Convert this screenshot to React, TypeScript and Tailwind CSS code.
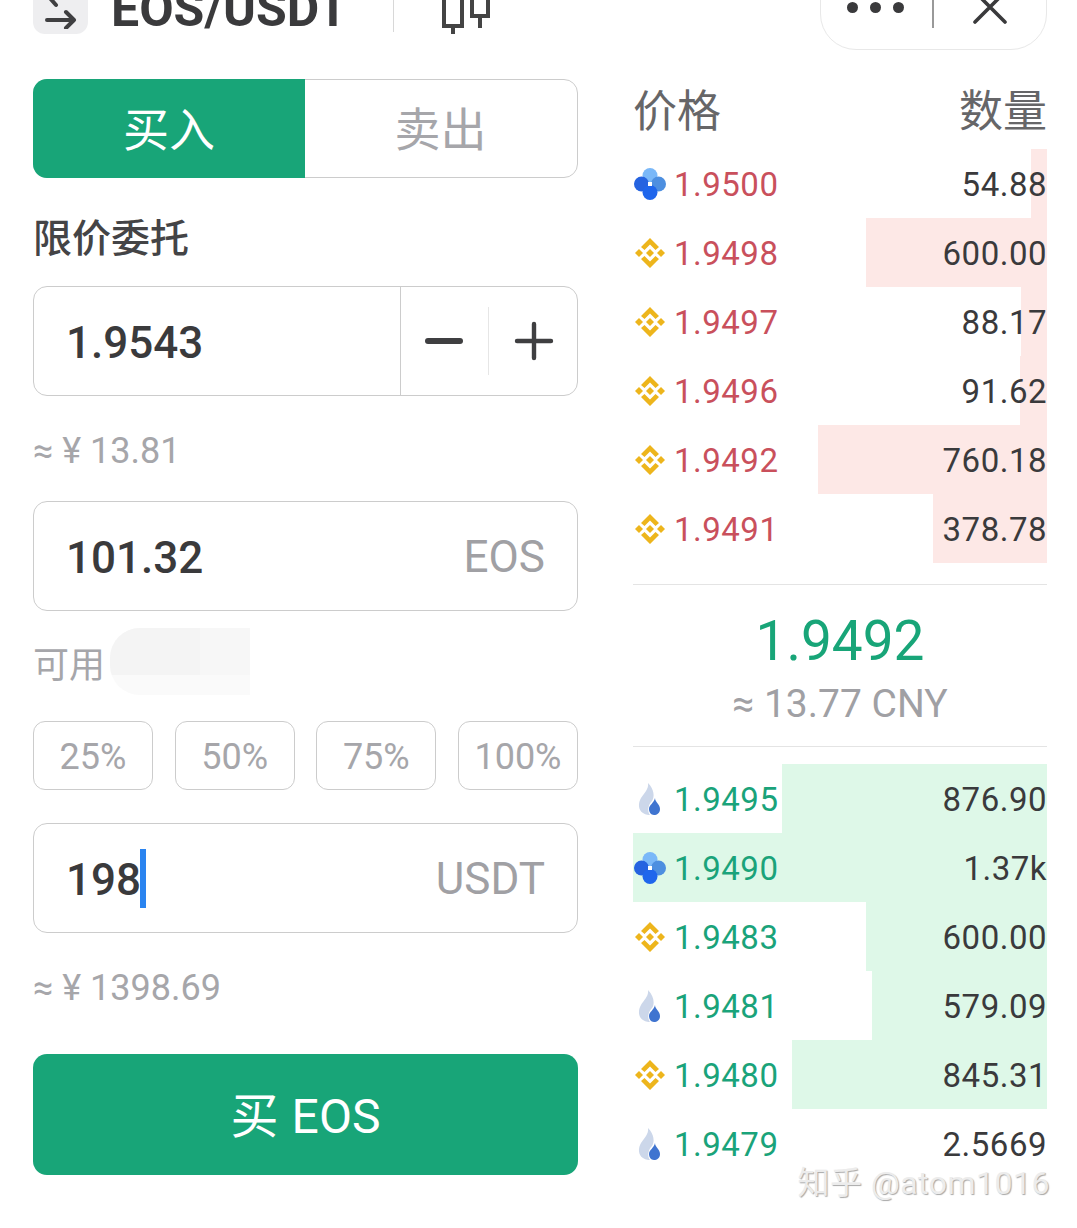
import React from 'react'

type Venue = 'okx' | 'bnb' | 'huobi'

type Order = {
  venue: Venue;
  price: string;
  amount: string;
  depth: number;
};

const asks: Order[] = [
  { venue: 'okx', price: '1.9500', amount: '54.88', depth: 16 },
  { venue: 'bnb', price: '1.9498', amount: '600.00', depth: 181 },
  { venue: 'bnb', price: '1.9497', amount: '88.17', depth: 26 },
  { venue: 'bnb', price: '1.9496', amount: '91.62', depth: 27 },
  { venue: 'bnb', price: '1.9492', amount: '760.18', depth: 229 },
  { venue: 'bnb', price: '1.9491', amount: '378.78', depth: 114 },
]

const bids: Order[] = [
  { venue: 'huobi', price: '1.9495', amount: '876.90', depth: 265 },
  { venue: 'okx', price: '1.9490', amount: '1.37k', depth: 414 },
  { venue: 'bnb', price: '1.9483', amount: '600.00', depth: 181 },
  { venue: 'huobi', price: '1.9481', amount: '579.09', depth: 175 },
  { venue: 'bnb', price: '1.9480', amount: '845.31', depth: 255 },
  { venue: 'huobi', price: '1.9479', amount: '2.5669', depth: 0 },
]

const VenueIcon = ({ venue }: { venue: Venue }) => {
  if (venue === 'okx') {
    return (
      <svg viewBox="0 0 32 32" className="w-8 h-8 shrink-0">
        <circle cx="16" cy="7.5" r="7.5" fill="#7ab8f8" />
        <circle cx="24.5" cy="16" r="7.5" fill="#4d8fe0" />
        <circle cx="7.5" cy="16" r="7.5" fill="#2563e0" />
        <circle cx="16" cy="24.5" r="7.5" fill="#1f66ec" />
        <rect x="14" y="14" width="4" height="4" fill="#ffffff" />
      </svg>
    )
  }
  if (venue === 'bnb') {
    return (
      <svg viewBox="0 0 32 32" className="w-8 h-8 shrink-0" fill="#edb51c">
        <polygon points="16,1 25,10 21.5,13 16,7.5 10.5,13 7,10" />
        <polygon points="16,31 25,22 21.5,19 16,24.5 10.5,19 7,22" />
        <polygon points="1,16 5,12 9,16 5,20" />
        <polygon points="23,16 27,12 31,16 27,20" />
        <polygon points="16,12 20,16 16,20 12,16" />
      </svg>
    )
  }
  return (
    <svg viewBox="0 0 32 32" className="w-8 h-8 shrink-0">
      <path d="M14 0 C15 6 10 10 7 15 C4 20 4 27 9 30 C12 32 15 32 16 32 C13 28 14 22 18 18 C21 14 20 6 14 0 Z" fill="#ccd7ea" />
      <path d="M21 15 C21 19 26 21 26 26 C26 30 23 32 20 32 C17 32 15 29 15 26 C15 22 20 20 21 15 Z" fill="#3f74d0" />
    </svg>
  )
}

const OrderRow = ({ order, side }: { order: Order; side: 'ask' | 'bid' }) => (
  <div className="relative flex items-center justify-between h-[69px]">
    <div
      className={`absolute right-0 top-0 bottom-0 ${side === 'ask' ? 'bg-[#fde8e6]' : 'bg-[#def8e8]'}`}
      style={{ width: order.depth }}
    />
    <div className="relative flex items-center gap-[8px] pl-px">
      <VenueIcon venue={order.venue} />
      <span className={`pt-0.5 text-[33px] tracking-[0.5px] ${side === 'ask' ? 'text-[#c9505c]' : 'text-[#1aa37a]'}`}>{order.price}</span>
    </div>
    <span className="relative pt-0.5 text-[33px] tracking-[0.5px] text-[#3a3a3c]">{order.amount}</span>
  </div>
)

const Field = ({ value, unit, caret }: { value: string; unit: string; caret?: boolean }) => (
  <div className="flex items-center justify-between h-[110px] px-[32px] border border-[#cccccc] rounded-[14px]">
    <div className="relative flex items-center text-[44px] font-medium text-[#3a3a3c]">
      <span className="pt-1">{value}</span>
      {caret && <span className="w-1.5 h-[59px] -ml-px bg-[#2a84f0]" />}
    </div>
    <span className="pt-0.5 text-[44px] text-[#a0a0a4]">{unit}</span>
  </div>
)

const App = () => {
  return (
    <div
      className="relative w-[1077px] h-[1228px] overflow-hidden bg-white"
      style={{ fontFamily: 'Roboto, "Noto Sans CJK SC", sans-serif' }}
    >
      {/* top bar, cut off by the top of the screenshot */}
      <header className="flex items-center h-[86px] -mt-9 pl-[33px] pr-[30px]">
        <div className="flex items-center justify-center w-[55px] h-[54px] rounded-xl bg-[#eeeef0]">
          <svg viewBox="0 0 32 44" className="w-8 h-11" fill="none" stroke="#3f3f41" strokeWidth="4" strokeLinecap="round" strokeLinejoin="round">
            <path d="M30 12 H4 M11 4 L4 12 L11 20" />
            <path d="M2 35 H29 M21 27 L29 35 L21 43" />
          </svg>
        </div>
        <span className="ml-[23px] pt-1 text-[50px] font-bold text-[#3a3a3c]">EOS/USDT</span>
        <div className="ml-[44px] w-px h-[52px] mt-[-2px] bg-[#d8d8d8]" />
        <svg viewBox="0 0 48 54" className="ml-[48px] w-12 h-[54px]" fill="none" stroke="#444444" strokeWidth="4">
          <rect x="2" y="10" width="18" height="36" />
          <path d="M11 46 V54" />
          <rect x="30" y="5" width="16" height="31" />
          <path d="M38 36 V48" />
        </svg>
        <div className="ml-auto flex items-center w-[227px] h-[86px] rounded-[36px] border border-[#e8e8e8] pl-[26px]">
          <div className="flex items-center gap-[12px]">
            <span className="w-[11px] h-[11px] rounded-full bg-[#3a3a3c]" />
            <span className="w-[11px] h-[11px] rounded-full bg-[#3a3a3c]" />
            <span className="w-[11px] h-[11px] rounded-full bg-[#3a3a3c]" />
          </div>
          <div className="ml-[28px] w-[2px] h-[42px] bg-[#999999]" />
          <svg viewBox="0 0 36 36" className="ml-[38px] w-9 h-9" fill="none" stroke="#3a3a3c" strokeWidth="3.6" strokeLinecap="round">
            <path d="M3 3 L33 33 M33 3 L3 33" />
          </svg>
        </div>
      </header>

      <main className="flex justify-between mt-[29px] pl-[33px] pr-[30px]">
        <section className="w-[545px]">
          <div className="flex h-[99px] rounded-[14px] border border-[#cccccc]">
            <div className="flex items-center justify-center w-[272px] -m-px pt-1 rounded-l-[14px] bg-[#18a578] text-[46px] text-white">买入</div>
            <div className="flex flex-1 items-center justify-center pt-1 text-[46px] text-[#a6a6aa]">卖出</div>
          </div>

          <div className="flex items-center h-[108px] pt-[14px] text-[39px] font-medium text-[#444446]">限价委托</div>

          <div className="flex h-[110px] border border-[#cccccc] rounded-[14px]">
            <div className="flex items-center flex-1 pl-[32px] pt-1 text-[44px] font-medium text-[#3a3a3c]">1.9543</div>
            <div className="flex items-center w-[177px] border-l border-[#cccccc]">
              <div className="flex items-center justify-center flex-1 h-[68px] border-r border-[#e6e6e6]">
                <svg viewBox="0 0 40 40" className="w-10 h-10" stroke="#3f3f41" strokeWidth="6" strokeLinecap="round">
                  <path d="M4 20 H36" />
                </svg>
              </div>
              <div className="flex items-center justify-center flex-1 pl-0.5">
                <svg viewBox="0 0 40 40" className="w-10 h-10" stroke="#3f3f41" strokeWidth="4.4" strokeLinecap="round">
                  <path d="M3 20 H37 M20 3 V37" />
                </svg>
              </div>
            </div>
          </div>

          <div className="flex items-center h-[105px] pt-[5px] text-[36px] text-[#a6a6aa]">≈ ¥ 13.81</div>

          <Field value="101.32" unit="EOS" />

          <div className="flex items-center h-[110px]">
            <span className="text-[36px] text-[#a6a6aa]">可用</span>
            <div className="relative w-[140px] h-[67px] ml-[5px] -mt-2.5 rounded-l-[30px] overflow-hidden bg-[#fafafa]">
              <div className="h-[47px] bg-[#f4f4f4]" />
              <div className="absolute right-0 top-0 w-[50px] h-[47px] bg-[#f7f7f7]" />
            </div>
          </div>

          <div className="flex justify-between h-[69px]">
            {['25%', '50%', '75%', '100%'].map((pct) => (
              <div key={pct} className="flex items-center justify-center w-[120px] pt-0.5 rounded-[12px] border border-[#cccccc] text-[36px] text-[#a6a6aa]">
                {pct}
              </div>
            ))}
          </div>

          <div className="mt-[33px]">
            <Field value="198" unit="USDT" caret />
          </div>

          <div className="flex items-center h-[121px] pb-[11px] text-[36px] text-[#a6a6aa]">≈ ¥ 1398.69</div>

          <div className="flex items-center justify-center gap-[13px] h-[121px] pt-1 rounded-[14px] bg-[#18a578] text-[48px] text-white">
            <span>买</span>
            <span>EOS</span>
          </div>
        </section>

        <section className="w-[414px]">
          <div className="flex items-center justify-between h-[62px] pt-1 mb-2 text-[44px] text-[#666668]">
            <span>价格</span>
            <span>数量</span>
          </div>

          {asks.map((order) => (
            <OrderRow key={order.price} order={order} side="ask" />
          ))}

          <div className="flex flex-col items-center justify-center mt-[21px] h-[163px] pt-[11px] border-y border-[#e4e4e4]">
            <span className="text-[55px] leading-[66px] text-[#18a578]">1.9492</span>
            <span className="text-[39px] leading-[60px] text-[#a0a0a4]">≈ 13.77 CNY</span>
          </div>

          <div className="mt-[17px]">
            {bids.map((order) => (
              <OrderRow key={order.price} order={order} side="bid" />
            ))}
          </div>
        </section>
      </main>

      {/* zhihu watermark over the bottom right corner */}
      <div className="absolute right-[27px] top-[1159px] text-[32px] tracking-[0.5px] text-[#ececec] [text-shadow:1px_1px_1px_#a8a8a8]">
        知乎 @atom1016
      </div>
    </div>
  )
}

export default App
